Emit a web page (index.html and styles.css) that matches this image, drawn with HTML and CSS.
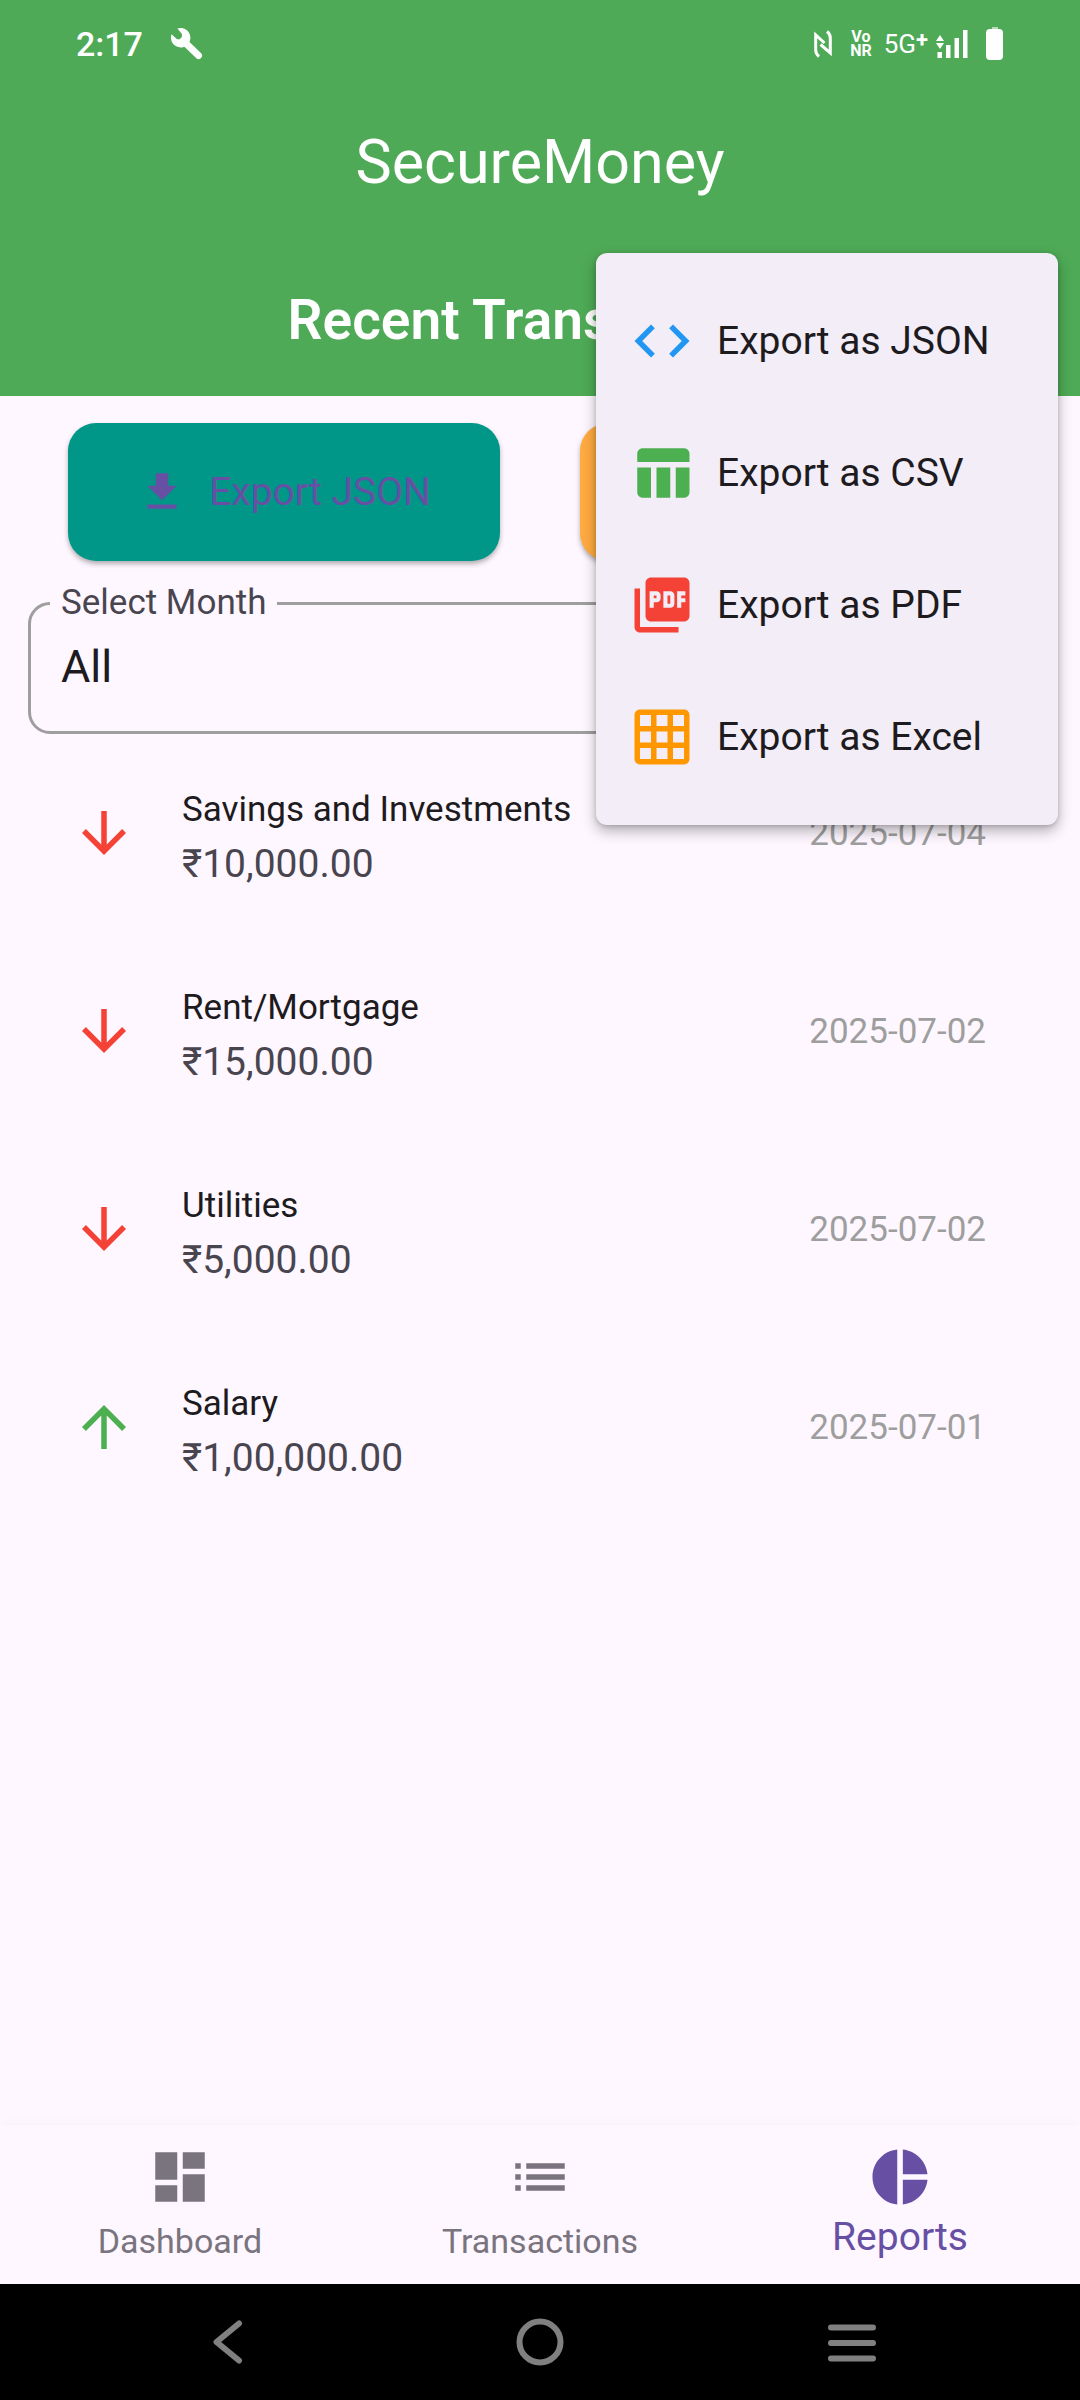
FILE: index.html
```html
<!DOCTYPE html>
<html lang="en">
<head>
<meta charset="utf-8">
<meta name="viewport" content="width=device-width, initial-scale=1">
<title>SecureMoney</title>
<link rel="stylesheet" href="styles.css">
</head>
<body>
<div class="app">
  <header class="header">
    <div class="status">
      <span class="status-time">2:17</span>
      <svg class="status-tool" viewBox="0 0 32 32" width="32" height="32" aria-hidden="true">
        <path d="M6.4.6A9.7 9.7 0 1 1 .6 6.3L6 11.2h2.6l2.3-2.3V6z" fill="#fff"/>
        <path d="M14 14.500 27.500 27.500" stroke="#fff" stroke-width="7" stroke-linecap="round"/>
      </svg>
      <div class="status-right">
        <svg viewBox="0 0 18 28" width="18" height="28" fill="none" stroke="#fff" stroke-width="3" aria-hidden="true">
          <path d="M5 26.500Q1.700 24 1.700 20V5L10.500 13M13 1.500Q16.300 4 16.300 8V23L6.500 14.500"/>
        </svg>
        <span class="vonr"><span>Vo</span><span>NR</span></span>
        <span class="network">5G<span class="plus">+</span></span>
        <svg class="signal" viewBox="0 0 32 28" width="32" height="28" fill="#fff" aria-hidden="true">
          <path d="M0 11 4 5l4 6zM0 13h8l-4 6zM1.500 22H6v6H1.500zM10 15h4.500v13H10zM18.500 8H23v20h-4.500zM27 0h4.500v28H27z"/>
        </svg>
        <svg class="battery" viewBox="0 0 18 34" width="18" height="34" fill="#fff" aria-hidden="true">
          <path d="M6 0h6v3H6z" opacity=".6"/><rect x="0" y="2" width="17" height="31" rx="4"/>
        </svg>
      </div>
    </div>
    <h1 class="title">SecureMoney</h1>
    <h2 class="subtitle">Recent Transactions</h2>
  </header>

  <main class="content">
    <div class="actions">
      <button class="action action-json" type="button">
        <svg viewBox="0 0 24 24" width="50" height="50" fill="currentColor" aria-hidden="true"><path d="M19 9h-4V3H9v6H5l7 7 7-7zM5 18v2h14v-2H5z"/></svg>
        Export JSON
      </button>
      <button class="action action-more" type="button" aria-label="More exports"></button>
    </div>

    <fieldset class="field">
      <legend><label for="month">Select Month</label></legend>
      <select id="month"><option>All</option></select>
    </fieldset>

    <ul class="list">
      <li class="row">
        <svg class="icon expense" viewBox="0 0 24 24" aria-hidden="true"><path d="M20 12l-1.410-1.410L13 16.170V4h-2v12.170l-5.580-5.590L4 12l8 8 8-8z"/></svg>
        <div class="entry"><div class="name">Savings and Investments</div><div class="amount">₹10,000.00</div></div>
        <time datetime="2025-07-04">2025-07-04</time>
      </li>
      <li class="row">
        <svg class="icon expense" viewBox="0 0 24 24" aria-hidden="true"><path d="M20 12l-1.410-1.410L13 16.170V4h-2v12.170l-5.580-5.590L4 12l8 8 8-8z"/></svg>
        <div class="entry"><div class="name">Rent/Mortgage</div><div class="amount">₹15,000.00</div></div>
        <time datetime="2025-07-02">2025-07-02</time>
      </li>
      <li class="row">
        <svg class="icon expense" viewBox="0 0 24 24" aria-hidden="true"><path d="M20 12l-1.410-1.410L13 16.170V4h-2v12.170l-5.580-5.590L4 12l8 8 8-8z"/></svg>
        <div class="entry"><div class="name">Utilities</div><div class="amount">₹5,000.00</div></div>
        <time datetime="2025-07-02">2025-07-02</time>
      </li>
      <li class="row">
        <svg class="icon income" viewBox="0 0 24 24" aria-hidden="true"><path d="M4 12l1.410 1.410L11 7.830V20h2V7.830l5.580 5.590L20 12l-8-8-8 8z"/></svg>
        <div class="entry"><div class="name">Salary</div><div class="amount">₹1,00,000.00</div></div>
        <time datetime="2025-07-01">2025-07-01</time>
      </li>
    </ul>
  </main>

  <nav class="tabs">
    <a class="tab" href="#dashboard">
      <svg class="icon" viewBox="0 0 24 24" aria-hidden="true"><path d="M3 13h8V3H3v10zm0 8h8v-6H3v6zm10 0h8V11h-8v10zm0-18v6h8V3h-8z"/></svg>
      <span>Dashboard</span>
    </a>
    <a class="tab" href="#transactions">
      <svg class="icon" viewBox="0 0 24 24" aria-hidden="true"><path d="M3 13h2v-2H3v2zm0 4h2v-2H3v2zm0-8h2V7H3v2zm4 4h14v-2H7v2zm0 4h14v-2H7v2zM7 7v2h14V7H7z"/></svg>
      <span>Transactions</span>
    </a>
    <a class="tab tab-active" href="#reports" aria-current="page">
      <svg class="icon" viewBox="0 0 24 24" aria-hidden="true"><path d="M11 2v20c-5.070-.5-9-4.790-9-10s3.930-9.500 9-10zm2.030 0v8.990H22c-.470-4.740-4.240-8.520-8.970-8.990zm0 11.010V22c4.740-.470 8.500-4.250 8.970-8.990h-8.970z"/></svg>
      <span>Reports</span>
    </a>
  </nav>

  <div class="system">
    <button type="button" aria-label="Back"><svg viewBox="0 0 48 48" width="48" height="48"><path d="M35 5.500 12.500 24 35 42.500"/></svg></button>
    <button type="button" aria-label="Home"><svg viewBox="0 0 48 48" width="48" height="48"><circle cx="24" cy="24" r="20.500"/></svg></button>
    <button type="button" aria-label="Recent apps"><svg viewBox="0 0 48 48" width="48" height="48"><path d="M3 9.500h42M3 25h42M3 40.500h42"/></svg></button>
  </div>

  <div class="menu" role="menu">
    <button class="menu-item" type="button" role="menuitem">
      <svg class="icon json" viewBox="0 0 24 24" aria-hidden="true"><path d="M9.400 16.600L4.800 12l4.600-4.600L8 6l-6 6 6 6 1.400-1.400zm5.200 0l4.600-4.600-4.600-4.600L16 6l6 6-6 6-1.400-1.400z"/></svg>
      Export as JSON
    </button>
    <button class="menu-item" type="button" role="menuitem">
      <svg class="icon csv" viewBox="0 0 24 24" aria-hidden="true"><path d="M10 10.020h5V21h-5zM17 21h3c1.100 0 2-.9 2-2v-9h-5v11zm3-18H5c-1.100 0-2 .9-2 2v3h19V5c0-1.100-.9-2-2-2zM3 19c0 1.100.9 2 2 2h3V10H3v9z"/></svg>
      Export as CSV
    </button>
    <button class="menu-item" type="button" role="menuitem">
      <svg class="icon pdf" viewBox="0 0 24 24" aria-hidden="true"><path d="M20 2H8c-1.100 0-2 .9-2 2v12c0 1.100.9 2 2 2h12c1.100 0 2-.9 2-2V4c0-1.100-.9-2-2-2zm-8.500 7.500c0 .83-.67 1.500-1.500 1.500H9v2H7.500V7H10c.83 0 1.500.67 1.500 1.500v1zm5 2c0 .83-.67 1.500-1.500 1.500h-2.500V7H15c.83 0 1.500.67 1.500 1.500v3zm4-3H19v1h1.500V11H19v2h-1.500V7h3v1.500zM9 9.500h1v-1H9v1zM4 6H2v14c0 1.100.9 2 2 2h14v-2H4V6zm10 5.500h1v-3h-1v3z"/></svg>
      Export as PDF
    </button>
    <button class="menu-item" type="button" role="menuitem">
      <svg class="icon excel" viewBox="0 0 24 24" aria-hidden="true"><path d="M20 2H4c-1.100 0-2 .9-2 2v16c0 1.100.9 2 2 2h16c1.100 0 2-.9 2-2V4c0-1.100-.9-2-2-2zM8 20H4v-4h4v4zm0-6H4v-4h4v4zm0-6H4V4h4v4zm6 12h-4v-4h4v4zm0-6h-4v-4h4v4zm0-6h-4V4h4v4zm6 12h-4v-4h4v4zm0-6h-4v-4h4v4zm0-6h-4V4h4v4z"/></svg>
      Export as Excel
    </button>
  </div>
</div>
</body>
</html>
```
FILE: styles.css
```css
* { box-sizing: border-box; }

body {
  margin: 0;
  background: #fef7ff;
  color: #1d1b20;
  font-family: Roboto, "Noto Sans", sans-serif;
  font-size: 39px;
}

button, select { font: inherit; color: inherit; border: 0; background: none; }

svg { display: block; flex: none; }

.app {
  position: relative;
  display: flex;
  flex-direction: column;
  min-height: 100vh;
}

.icon { width: 66px; height: 66px; fill: currentColor; }

/* Header */
.header {
  padding-bottom: 38px;
  background: #4eaa56;
  color: #fff;
  text-align: center;
}

.status {
  display: flex;
  align-items: center;
  height: 88px;
  padding: 0 76px;
}

.status-time { font-size: 34px; font-weight: 500; }
.status-tool { margin-left: 28px; fill: none; }

.status-right {
  display: flex;
  align-items: center;
  margin-left: auto;
}

.vonr {
  display: flex;
  flex-direction: column;
  align-items: center;
  margin: 0 12px 0 18px;
  font-size: 16px;
  font-weight: 700;
  line-height: 14px;
}

.network { display: flex; font-size: 26px; line-height: 28px; }
.plus { font-size: 22px; font-weight: 700; line-height: 20px; }
.signal { margin-left: 8px; }
.battery { margin-left: 18px; }

.title {
  margin: 0;
  font-size: 61px;
  font-weight: 400;
  line-height: 148px;
}

.subtitle {
  margin: 46px 0 0;
  font-size: 55px;
  font-weight: 600;
  line-height: 76px;
}

/* Content */
.content { flex: 1; }

.actions {
  display: flex;
  gap: 80px;
  padding: 27px 68px 0;
}

.action {
  display: flex;
  flex: 1;
  align-items: center;
  justify-content: center;
  gap: 22px;
  height: 138px;
  border-radius: 28px;
  box-shadow: 0 3px 5px rgba(0, 0, 0, .3);
}

.action-json { background: #009688; color: #6750a4; }
.action-more { background: #ffab40; }

.field {
  margin: 22px 28px 0;
  padding: 0 19px 22px;
  border: 3px solid #9e9e9e;
  border-radius: 22px;
}

.field legend {
  padding: 0 11px;
  color: #49454f;
  font-size: 35px;
  line-height: 40px;
}

.field select {
  width: 100%;
  height: 86px;
  padding: 0 11px;
  appearance: none;
  font-size: 45px;
}

.list { margin: 0; padding: 0; list-style: none; }

.row {
  display: flex;
  align-items: center;
  gap: 45px;
  height: 198px;
  padding: 0 94px 0 71px;
}

.expense { color: #f44336; }
.income { color: #4caf50; }

.entry { flex: 1; padding-top: 8px; line-height: 54px; }
.name { font-size: 35px; }
.amount { color: #49454f; }
.row time { color: #9e9e9e; font-size: 35px; }

/* Bottom tabs */
.tabs {
  display: flex;
  height: 159px;
  background: #fef7ff;
  box-shadow: 0 -4px 8px rgba(0, 0, 0, .02);
}

.tab {
  display: flex;
  flex: 1;
  flex-direction: column;
  align-items: center;
  padding-top: 19px;
  color: #79747e;
  font-size: 34px;
  line-height: 62px;
  text-decoration: none;
}

.tab-active { color: #6750a4; font-size: 39px; line-height: 54px; }

/* System navigation */
.system {
  display: flex;
  height: 116px;
  padding: 0 72px;
  background: #000;
}

.system button {
  display: flex;
  flex: 1;
  align-items: center;
  justify-content: center;
}

.system svg {
  fill: none;
  stroke: #808080;
  stroke-width: 6;
  stroke-linecap: round;
  stroke-linejoin: round;
}

/* Export menu */
.menu {
  position: absolute;
  top: 253px;
  right: 22px;
  width: 462px;
  padding: 22px 0;
  border-radius: 11px;
  background: #f3edf7;
  box-shadow: 0 6px 14px rgba(0, 0, 0, .3), 0 1px 4px rgba(0, 0, 0, .15);
}

.menu-item {
  display: flex;
  align-items: center;
  gap: 22px;
  width: 100%;
  height: 132px;
  padding: 0 33px;
}

.json { color: #2196f3; }
.csv { color: #4caf50; }
.pdf { color: #f44336; }
.excel { color: #ff9800; }
```
